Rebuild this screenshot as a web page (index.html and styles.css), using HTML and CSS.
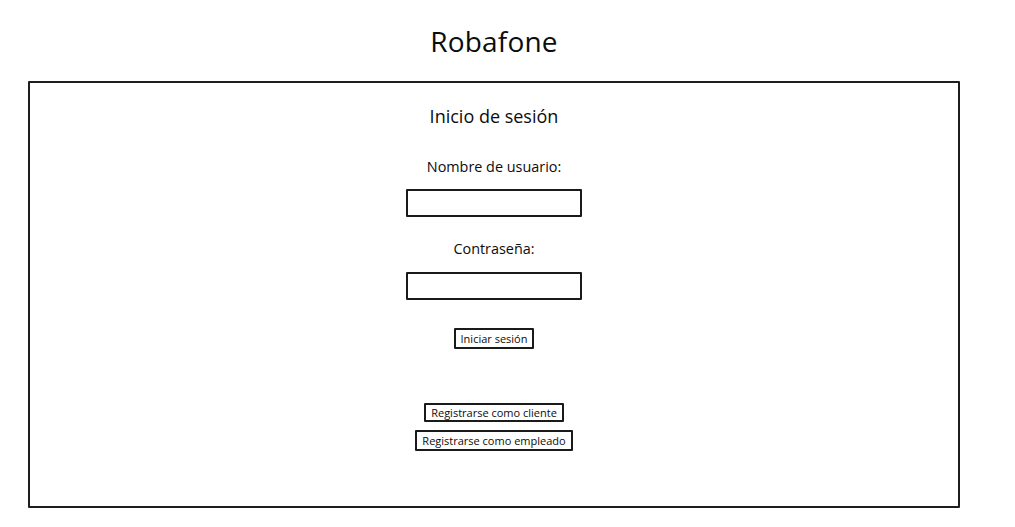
FILE: index.html
```html
<!DOCTYPE html>
<html lang="es">
<head>
<meta charset="utf-8">
<title>Robafone</title>
<link rel="stylesheet" href="styles.css">
</head>
<body>
<header class="header">
  <h1 class="brand">Robafone</h1>
</header>
<main class="panel">
  <h2 class="panel-title">Inicio de sesión</h2>
  <label class="field-label label-user" for="user">Nombre de usuario:</label>
  <input class="field-input input-user" id="user" type="text">
  <label class="field-label label-pass" for="pass">Contraseña:</label>
  <input class="field-input input-pass" id="pass" type="password">
  <button class="btn btn-login" type="button">Iniciar sesión</button>
  <button class="btn btn-client" type="button">Registrarse como cliente</button>
  <button class="btn btn-employee" type="button">Registrarse como empleado</button>
</main>
</body>
</html>
```

FILE: styles.css
```css
html, body {
  margin: 0;
  padding: 0;
  background: #ffffff;
}

body {
  font-family: "Open Sans", "Lato", sans-serif;
  color: #0c0c0c;
  width: 1015px;
}

.header {
  display: flex;
  justify-content: center;
  padding-top: 24px;
  height: 81px;
  box-sizing: border-box;
  width: 988px;
}

.brand {
  margin: 0;
  font-size: 28px;
  line-height: 34px;
  font-weight: 500;
  letter-spacing: 0.2px;
}

.panel {
  margin-left: 28px;
  width: 932px;
  height: 427px;
  box-sizing: border-box;
  border: 2px solid #1e1e1e;
  border-radius: 1px;
  display: flex;
  flex-direction: column;
  align-items: center;
  padding-top: 22px;
}

.panel-title {
  margin: 0;
  font-size: 18px;
  line-height: 22px;
  font-weight: 400;
}

.field-label {
  font-size: 14.4px;
  line-height: 18px;
}

.label-user {
  margin-top: 31px;
}

.label-pass {
  margin-top: 23px;
}

.field-input {
  width: 176px;
  height: 28px;
  box-sizing: border-box;
  border: 2px solid #1a1a1a;
  border-radius: 1px;
  background: #ffffff;
  outline: none;
  padding: 0 6px;
  margin-left: 0;
  margin-right: 0;
  margin-bottom: 0;
}

.input-user {
  margin-top: 13px;
}

.input-pass {
  margin-top: 14px;
}

.btn {
  font-family: "Open Sans", "Lato", sans-serif;
  font-size: 11px;
  line-height: 15px;
  color: #0c0c0c;
  background: #ffffff;
  border: 2px solid #1a1a1a;
  border-radius: 1px;
  box-sizing: border-box;
  padding: 0 2px;
  margin: 0;
  cursor: pointer;
  white-space: nowrap;
}

.btn-login {
  margin-top: 28px;
  height: 21px;
  width: 80px;
}

.btn-client {
  margin-top: 54px;
  height: 19px;
  width: 140px;
}

.btn-employee {
  margin-top: 8px;
  height: 21px;
  width: 158px;
}
```
